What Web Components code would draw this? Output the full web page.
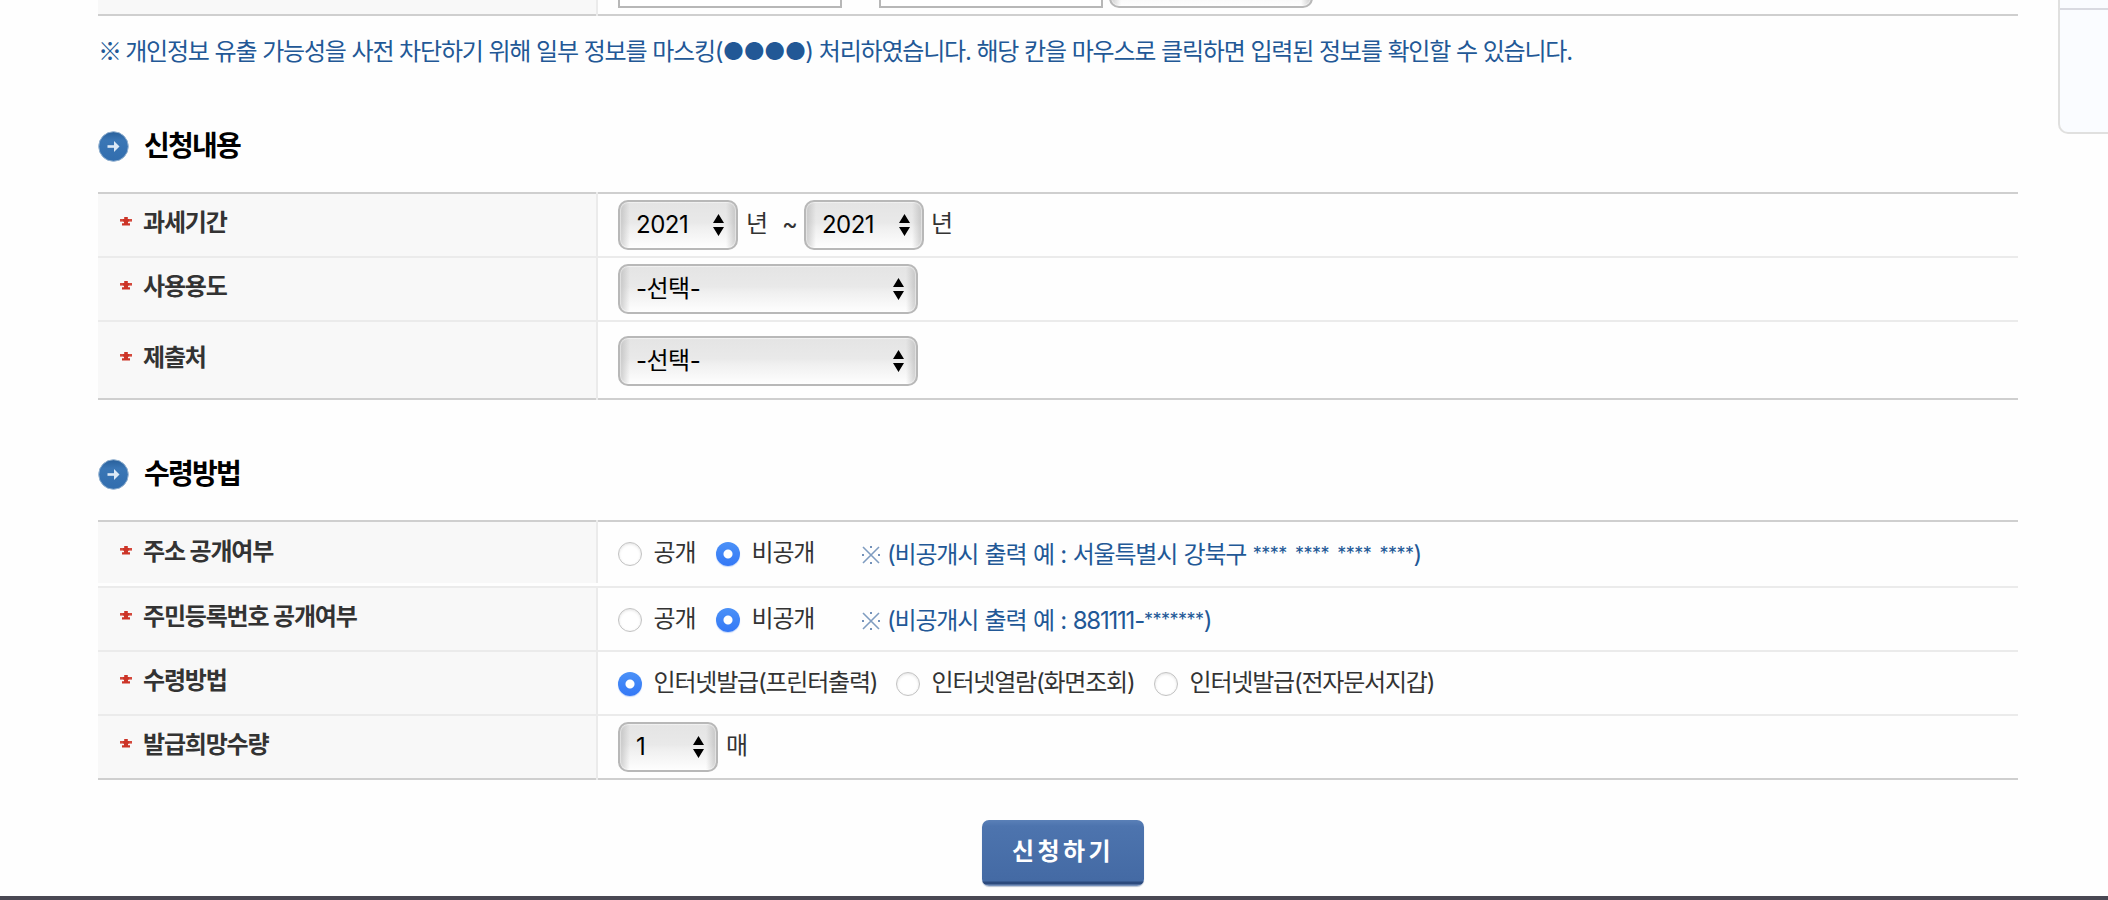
<!DOCTYPE html>
<html lang="ko">
<head>
<meta charset="utf-8">
<title>신청내용</title>
<style>
  body {
    margin: 0;
    width: 2108px;
    height: 900px;
    overflow: hidden;
    background: #fefefe;
    color: #333;
    font-family: Inter, "Noto Sans CJK KR", sans-serif;
    font-size: 24px;
    letter-spacing: -1.2px;
    word-spacing: .3px;
    line-height: 30px;
  }

  .mark {
    margin-right: -1.5px;
    font-family: "Noto Sans CJK KR", sans-serif;
    font-weight: 500;
  }

  .mask {
    font-size: 18px;
    letter-spacing: -.5px;
    word-spacing: 3.6px;
    line-height: 1;
    vertical-align: 3px;
  }
</style>
</head>
<body>
<apply-page>
  <form-table>
    <form-row style="--row: 14px" last>
      <text-field></text-field>
      <text-field style="margin-left: 37px"></text-field>
      <select-box style="--width: 204px; margin: -48px 0 0 6px"></select-box>
    </form-row>
  </form-table>
  <notice-text><span><span class="mark">※</span> 개인정보 유출 가능성을 사전 차단하기 위해 일부 정보를 마스킹(●●●●) 처리하였습니다. 해당 칸을 마우스로 클릭하면 입력된 정보를 확인할 수 있습니다.</span></notice-text>

  <section-title style="--above: 57px">신청내용</section-title>
  <form-table top>
    <form-row label="과세기간" style="--row: 62px">
      <select-box style="--width: 120px">2021</select-box>
      <unit-text style="margin-left: 8px">년</unit-text>
      <unit-text style="margin-left: 15px; width: 22px">~</unit-text>
      <select-box style="--width: 120px">2021</select-box>
      <unit-text style="margin-left: 7px">년</unit-text>
    </form-row>
    <form-row label="사용용도" style="--row: 62px">
      <select-box style="--width: 300px">-선택-</select-box>
    </form-row>
    <form-row label="제출처" style="--row: 76px" last>
      <select-box style="--width: 300px; margin-top: 2px">-선택-</select-box>
    </form-row>
  </form-table>

  <section-title style="--above: 50px">수령방법</section-title>
  <form-table top>
    <form-row label="주소 공개여부" style="--row: 64px; --gap: 3px">
      <radio-option style="--width: 98px">공개</radio-option>
      <radio-option style="--width: 145px" checked>비공개</radio-option>
      <hint-text>(비공개시 출력 예 : 서울특별시 강북구 <span class="mask">**** **** **** ****</span>)</hint-text>
    </form-row>
    <form-row label="주민등록번호 공개여부" style="--row: 62px; --drop: 2px">
      <radio-option style="--width: 98px">공개</radio-option>
      <radio-option style="--width: 145px" checked>비공개</radio-option>
      <hint-text>(비공개시 출력 예 : 881111-<span class="mask">*******</span>)</hint-text>
    </form-row>
    <form-row label="수령방법" style="--row: 62px; --drop: 2px">
      <radio-option style="--width: 278px" checked>인터넷발급(프린터출력)</radio-option>
      <radio-option style="--width: 258px">인터넷열람(화면조회)</radio-option>
      <radio-option style="--width: 290px">인터넷발급(전자문서지갑)</radio-option>
    </form-row>
    <form-row label="발급희망수량" style="--row: 62px" last>
      <select-box style="--width: 100px">1</select-box>
      <unit-text style="margin-left: 8px">매</unit-text>
    </form-row>
  </form-table>

  <submit-button>신청하기</submit-button>
  <side-panel slot="side"></side-panel>
</apply-page>

<script>
const define = (name, html, setup) => {
  const template = document.createElement('template');
  template.innerHTML = html;

  customElements.define(name, class extends HTMLElement {
    constructor() {
      super();
      this.attachShadow({ mode: 'open' }).append(template.content.cloneNode(true));
    }

    connectedCallback() {
      if (setup) setup(this, this.shadowRoot);
    }
  });
};

define('apply-page', `
  <style>
    :host {
      display: flex;
      flex-direction: column;
      height: 900px;
    }

    .content {
      display: flex;
      height: 896px;
    }

    main {
      display: flex;
      flex: none;
      flex-direction: column;
      width: 1920px;
      margin-left: 98px;
    }

    .side {
      flex: none;
      margin-left: 40px;
    }

    footer {
      height: 4px;
      background: #494853;
    }
  </style>
  <div class="content">
    <main><slot></slot></main>
    <div class="side"><slot name="side"></slot></div>
  </div>
  <footer></footer>
`);

define('form-table', `
  <style>
    :host {
      display: flex;
      flex-direction: column;
    }

    .top {
      display: none;
      grid-template-columns: 498px 2px 1fr;
      height: 2px;
      background: #cfcfcf;
    }

    :host([top]) .top {
      display: grid;
    }

    .top i {
      grid-column: 2;
      background: #ebebeb;
    }
  </style>
  <div class="top"><i></i></div>
  <slot></slot>
`);

define('form-row', `
  <style>
    :host {
      --line: #ebebeb;
      display: grid;
      grid-template-columns: 498px 2px 1fr;
      height: calc(var(--row) + 2px);
      flex: none;
    }

    :host([last]) {
      --line: #cfcfcf;
    }

    .label, .value {
      display: flex;
      align-items: center;
      box-sizing: border-box;
      height: calc(var(--row) + 2px);
      border-bottom: 2px solid var(--line);
    }

    .label {
      padding: 0 0 5px 22px;
      background: linear-gradient(#f8f8f8, #f8f8f8) no-repeat 0 0 / 100% calc(var(--row) - var(--gap, 0px));
      color: #333;
      font-weight: 700;
    }

    .label svg {
      width: 12px;
      height: 9px;
      margin: -3px 11px 0 0;
    }

    .divider {
      background: linear-gradient(#ebebeb, #ebebeb) no-repeat 0 0 / 100% calc(var(--row) - var(--gap, 0px));
      border-bottom: 2px solid #ebebeb;
    }

    .value {
      padding: var(--drop, 0) 0 0 20px;
    }
  </style>
  <div class="label">
    <svg viewBox="0 0 12 9">
      <path d="M0 2h12v2.6H0z" fill="#d4493c"/>
      <path d="M4.2 0h3.6v2H9v2.6H8v1.6h2V8.6H2V6.2h2V4.6H3V2h1.2z" fill="#cc3427"/>
    </svg>
    <span></span>
  </div>
  <div class="divider"></div>
  <div class="value"><slot></slot></div>
`, (host, root) => {
  const label = host.getAttribute('label');
  root.querySelector('span').textContent = label || '';
  if (!label) root.querySelector('svg').remove();
});

define('text-field', `
  <style>
    :host {
      display: block;
      flex: none;
      box-sizing: border-box;
      width: 224px;
      height: 50px;
      margin-top: -48px;
      border: 2px solid #b7b7b7;
      background: #fff;
    }
  </style>
`);

define('select-box', `
  <style>
    :host {
      display: flex;
      flex: none;
      align-items: center;
      justify-content: space-between;
      box-sizing: border-box;
      width: var(--width);
      height: 50px;
      padding: 0 12px 0 16px;
      border: 2px solid #b8b8b8;
      border-radius: 10px;
      background:
        linear-gradient(90deg, rgba(175, 175, 175, .6), rgba(200, 200, 200, 0) 10px, rgba(200, 200, 200, 0) calc(100% - 10px), rgba(175, 175, 175, .6)),
        linear-gradient(#e4e4e4, #e9e9e9 45%, #efefef 55%, #fefefe);
      box-shadow: inset 0 0 1px 1px rgba(255, 255, 255, .5);
      color: #000;
      letter-spacing: -.5px;
    }

    svg {
      width: 11px;
      height: 22px;
    }
  </style>
  <span><slot></slot></span>
  <svg viewBox="0 0 11 22"><path d="M5.5 0 11 9H0zM0 13h11l-5.5 9z"/></svg>
`);

define('unit-text', `
  <style>
    :host {
      display: block;
      margin-top: -3px;
    }
  </style>
  <slot></slot>
`);

define('radio-option', `
  <style>
    :host {
      display: flex;
      flex: none;
      align-items: center;
      width: var(--width);
      white-space: nowrap;
    }

    i {
      box-sizing: border-box;
      width: 24px;
      height: 24px;
      margin-right: 11.5px;
      border: 1px solid #c2c2c2;
      border-radius: 50%;
      background: #fff;
      box-shadow: inset 0 1px 3px rgba(0, 0, 0, .12);
    }

    :host([checked]) i {
      border: 0;
      background: radial-gradient(circle, #fff 4px, transparent 5px), linear-gradient(#4b91f7, #3478f6);
      box-shadow: 0 1px 1px rgba(52, 120, 246, .3);
    }

    span {
      margin-top: -2px;
    }
  </style>
  <i></i><span><slot></slot></span>
`);

define('hint-text', `
  <style>
    :host {
      display: flex;
      align-items: center;
      margin-top: 2px;
      color: #225896;
      white-space: nowrap;
      word-spacing: 1px;
    }

    svg {
      width: 18px;
      height: 18px;
      margin: 0 7px 0 1px;
    }
  </style>
  <svg viewBox="0 0 18 18">
    <path d="M1 1l16 16M17 1 1 17" stroke="#7f9cc0" stroke-width="1.6"/>
    <path d="M8 0h2v2H8zM8 16h2v2H8zM0 8h2v2H0zM16 8h2v2h-2z" fill="#7391b9"/>
  </svg>
  <div><slot></slot></div>
`);

define('notice-text', `
  <style>
    :host {
      display: block;
      height: 30px;
      margin-top: 19px;
      color: #225896;
      white-space: nowrap;
    }

    ::slotted(span) {
      display: block;
    }
  </style>
  <slot></slot>
`);

define('section-title', `
  <style>
    :host {
      display: flex;
      align-items: center;
      height: 30px;
      padding: var(--above) 0 31px;
      margin-top: 9px;
      color: #000;
      font-size: 28px;
      font-weight: 700;
      letter-spacing: -1.8px;
    }

    svg {
      flex: none;
      width: 31px;
      height: 31px;
      margin-right: 15px;
    }
  </style>
  <svg viewBox="0 0 31 31">
    <defs>
      <linearGradient id="disc" x2="0" y2="1">
        <stop offset="0" stop-color="#285f9b"/>
        <stop offset=".3" stop-color="#3a76b5"/>
        <stop offset="1" stop-color="#316dae"/>
      </linearGradient>
    </defs>
    <circle cx="15.5" cy="15.5" r="14.8" fill="url(#disc)" stroke="#91b0cf"/>
    <path d="M9.5 15.5h9" stroke="#dce9f6" stroke-width="2.6"/>
    <path d="M16 10l5.5 5.5L16 21z" fill="#dce9f6"/>
  </svg>
  <span><slot></slot></span>
`);

define('submit-button', `
  <style>
    :host {
      display: flex;
      flex: none;
      align-items: center;
      justify-content: center;
      align-self: flex-start;
      box-sizing: border-box;
      width: 162px;
      height: 66px;
      margin: 40px 0 0 884px;
      padding-bottom: 7px;
      border-radius: 7px;
      background: linear-gradient(#5a80b7, #4d74ae 6px, #446aa4 61px, #2c4a7d 62px, #2c4a7d 64px, #7590bb 65px);
      box-shadow: 0 1px 1px #b9c3d3;
      color: #fff;
      font-family: "Noto Sans CJK KR", sans-serif;
      font-size: 24px;
      font-weight: 700;
      letter-spacing: 3.4px;
    }
  </style>
  <span><slot></slot></span>
`);

define('side-panel', `
  <style>
    :host {
      display: block;
      box-sizing: border-box;
      width: 52px;
      height: 134px;
      padding-top: 8px;
      border: 2px solid #e0e0df;
      border-top: 0;
      border-right: 0;
      border-bottom-left-radius: 10px;
      background: #fafcff;
    }

    hr {
      height: 2px;
      margin: 0;
      border: 0;
      background: #d9dae1;
    }
  </style>
  <hr>
`);
</script>
</body>
</html>
